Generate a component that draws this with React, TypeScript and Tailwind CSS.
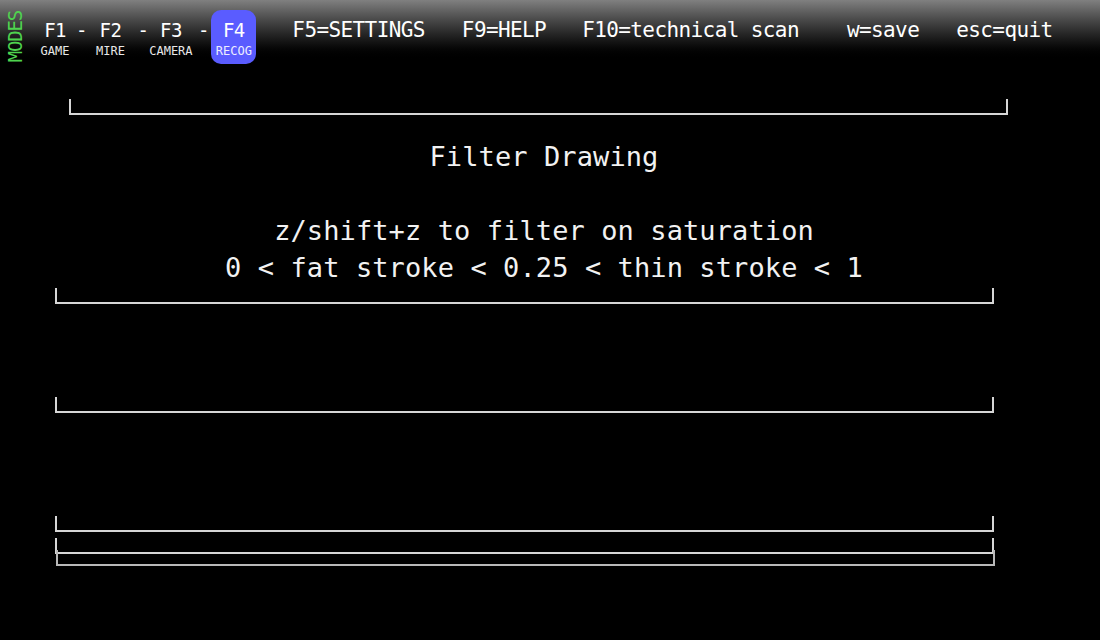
const mono = "font-['DejaVu_Sans_Mono','Liberation_Mono',monospace]"

function Bracket({ className = '' }: { className?: string }) {
  return <div className={`h-[16px] w-[939px] border-x-2 border-b-2 border-[#d6d6d6] ${className}`}></div>
}

function Mode({ keyName, label, width, className = '' }: { keyName: string; label: string; width: string; className?: string }) {
  return (
    <div className={`flex flex-col items-center pt-[20px] ${width} ${className}`}>
      <span className="text-[19px] leading-[20px] tracking-[-0.6px] text-white">{keyName}</span>
      <span className="mt-[4px] text-[12px] leading-[14px] text-[#e8e8e8]">{label}</span>
    </div>
  )
}

function Dash({ className = '' }: { className?: string }) {
  return <span className={`pt-[20px] text-[19px] leading-[20px] text-white ${className}`}>-</span>
}

export default function App() {
  return (
    <div className={`h-[640px] w-[1100px] overflow-hidden bg-black ${mono}`}>
      {/* top bar */}
      <div className="flex h-[70px] items-start bg-gradient-to-b from-[#808080] to-black to-[88%]">
        <div className="ml-[7px] mt-[11px] text-[19px] leading-[16px] tracking-[-1.2px] text-[#4fd34f] [writing-mode:vertical-rl] rotate-180">
          MODES
        </div>
        <Mode keyName="F1" label="GAME" width="w-[32px]" className="ml-[16px]" />
        <Dash className="ml-[5px]" />
        <Mode keyName="F2" label="MIRE" width="w-[32px]" className="ml-[7px]" />
        <Dash className="ml-[11px]" />
        <Mode keyName="F3" label="CAMERA" width="w-[44px]" />
        <Dash className="ml-[5px]" />
        <div className="ml-[2px] mt-[10px] flex h-[54px] w-[45px] flex-col items-center rounded-[10px] bg-[#5a5cff]">
          <span className="pt-[10px] text-[19px] leading-[20px] tracking-[-0.6px] text-white">F4</span>
          <span className="mt-[4px] text-[12px] leading-[14px] text-[#eeeeff]">RECOG</span>
        </div>
        <div className="mt-[18px] flex whitespace-pre text-[21px] leading-[24px] tracking-[-0.6px] text-white">
          <span className="ml-[36px]">F5=SETTINGS</span>
          <span className="ml-[37px]">F9=HELP</span>
          <span className="ml-[36px]">F10=technical scan</span>
          <span className="ml-[48px]">w=save</span>
          <span className="ml-[37px]">esc=quit</span>
        </div>
      </div>

      {/* recognition panel */}
      <div className="flex flex-col">
        <Bracket className="ml-[69px] mt-[29px]" />
        <div className="mt-[23px] w-[1088px] text-center text-[27px] leading-[37px] tracking-[0.1px] text-[#f2f2f2]">
          <p>Filter Drawing</p>
          <p>&nbsp;</p>
          <p>z/shift+z to filter on saturation</p>
          <p>0 &lt; fat stroke &lt; 0.25 &lt; thin stroke &lt; 1</p>
        </div>
        <Bracket className="ml-[55px] mt-[2px]" />
        <Bracket className="ml-[55px] mt-[93px]" />
        <Bracket className="ml-[55px] mt-[103px]" />
        <Bracket className="ml-[55px] mt-[6px]" />
        <div className="ml-[56px] -mt-[4px] h-[16px] w-[939px] border-x-2 border-b-2 border-[#b8b8b8]"></div>
      </div>
    </div>
  )
}
